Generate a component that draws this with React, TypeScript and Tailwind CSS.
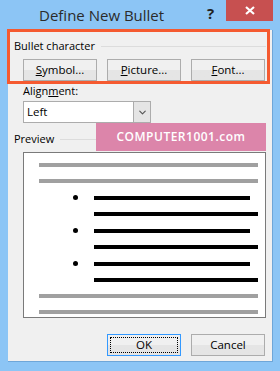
import { ChevronDown } from "lucide-react";

const font = { fontFamily: '"Open Sans", "Noto Sans", sans-serif' };

function Btn({ children, focused }: { children: React.ReactNode; focused?: boolean }) {
  return (
    <button
      className={`relative w-[74px] h-[22px] border ${
        focused ? "border-[#3399ff]" : "border-[#acacac]"
      } bg-gradient-to-b from-[#f0f0f0] from-50% to-[#e5e5e5] to-50% text-[11.5px] leading-[20px] text-black`}
    >
      {focused && <span className="absolute inset-[2px] border border-dotted border-black" />}
      <span className="relative">{children}</span>
    </button>
  );
}

function Line({ w, color = "bg-[#a0a0a0]" }: { w: string; color?: string }) {
  return <div className={`h-[4px] ${w} ${color}`} />;
}

function BulletRow() {
  return (
    <>
      <div className="flex items-center">
        <div className="w-[34px]" />
        <div className="w-[5px] h-[5px] rounded-full bg-black" />
        <div className="ml-[16px]">
          <Line w="w-[156px]" color="bg-black" />
        </div>
      </div>
      <div className="pl-[55px]">
        <Line w="w-[164px]" color="bg-black" />
      </div>
    </>
  );
}

export default function App() {
  return (
    <div className="relative w-[280px] h-[371px] bg-[#8cc5f5] flex flex-col overflow-hidden" style={font}>
      {/* Title bar */}
      <div className="relative h-[30px] flex items-start">
        <span className="ml-[39px] mt-[5px] text-[15px] leading-[20px] text-[#2b2b2b]">Define New Bullet</span>
        <span className="absolute left-[207px] top-[2px] text-[15px] font-bold text-[#222]">?</span>
        <div className="absolute left-[226px] top-0 w-[47px] h-[21px] bg-[#c75050] flex items-center justify-center">
          <svg width="10" height="9" viewBox="0 0 10 9">
            <path d="M1 1 L9 8 M9 1 L1 8" stroke="white" strokeWidth="2.2" />
          </svg>
        </div>
      </div>

      {/* Body */}
      <div className="ml-[8px] w-[265px] h-[332px] bg-[#f0f0f0] border-r border-b border-[#6ea6d8] flex flex-col text-[11px] text-black">
        <div className="mt-[8px] h-[16px] flex items-center pl-[6px] pr-[6px]">
          <span className="leading-[16px]">Bullet character</span>
          <div className="flex-1 ml-[6px] h-[1px] bg-[#dcdcdc]" />
        </div>
        <div className="mt-[5px] pl-[15px] flex gap-[10px]">
          <Btn><u>S</u>ymbol...</Btn>
          <Btn><u>P</u>icture...</Btn>
          <Btn><u>F</u>ont...</Btn>
        </div>

        <div className="mt-[2px] pl-[15px] h-[16px] leading-[16px]">
          Align<u>m</u>ent:
        </div>
        <div className="mt-[2px] ml-[15px] w-[128px] h-[22px] flex border border-[#acacac] bg-white">
          <span className="flex-1 pl-[3px] leading-[20px] text-[11.5px]">Left</span>
          <div className="w-[17px] h-full bg-[#e5e5e5] border-l border-[#acacac] flex items-center justify-center">
            <ChevronDown size={11} strokeWidth={2.5} className="text-[#555]" />
          </div>
        </div>

        <div className="mt-[8px] h-[16px] flex items-center pl-[6px] pr-[6px]">
          <span className="leading-[16px]">Preview</span>
          <div className="flex-1 ml-[6px] h-[1px] bg-[#dcdcdc]" />
        </div>

        <div className="mt-[5px] ml-[15px] w-[243px] h-[166px] bg-white border border-[#7a7a7a] pt-[10px] pl-[15px] flex flex-col gap-[12px]">
          <Line w="w-[219px]" />
          <Line w="w-[219px]" />
          <BulletRow />
          <BulletRow />
          <BulletRow />
          <Line w="w-[219px]" />
          <Line w="w-[219px]" />
        </div>

        <div className="mt-[16px] pl-[99px] flex gap-[10px]">
          <Btn focused>OK</Btn>
          <Btn>Cancel</Btn>
        </div>
      </div>

      {/* Annotation overlays */}
      <div className="absolute left-[7px] top-[29px] w-[263px] h-[55px] border-[3px] border-[#f55a30] pointer-events-none" />
      <div className="absolute left-[96px] top-[123px] w-[170px] h-[28px] bg-[#dc85aa] flex items-center justify-center">
        <span className="text-white text-[12px] font-semibold tracking-[0.5px]">COMPUTER1001.com</span>
      </div>
    </div>
  );
}
